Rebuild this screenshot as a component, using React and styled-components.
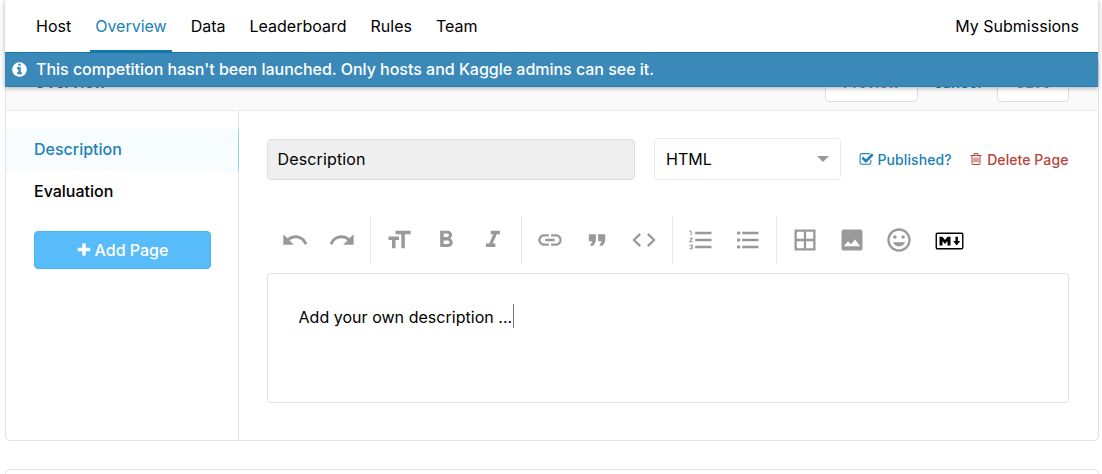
import React from "react";
import styled, { createGlobalStyle } from "styled-components";
import {
  MdUndo, MdRedo, MdFormatSize, MdFormatBold, MdFormatItalic, MdLink, MdFormatQuote, MdCode,
  MdFormatListNumbered, MdFormatListBulleted, MdBorderAll, MdInsertEmoticon,
} from "react-icons/md";

const Global = createGlobalStyle`
  * { box-sizing: border-box; }
  body { margin: 0; background: #fff; color: #000; font-family: Inter, "Liberation Sans", sans-serif; font-size: 16px; overflow: hidden; }
`;
const Page = styled.div`
  height: 474px;
  overflow: hidden;
  padding: 0 3px 0 5px;
`;
const Header = styled.header`
  position: relative;
  z-index: 2;
  height: 87px;
  margin-right: 1px;
  background: #fff;
  box-shadow: 0 1px 5px rgba(0, 0, 0, 0.32);
`;
const Nav = styled.nav`
  display: flex;
  height: 52px;
  padding: 0 14px 0 26px;
`;
const NavItem = styled.a`
  display: flex;
  align-items: center;
  height: 52px;
  padding: 0 5px;
  margin-right: ${(p) => (p.$last ? 0 : "14px")};
  margin-left: ${(p) => (p.$last ? "auto" : 0)};
  font-size: 16px;
  white-space: nowrap;
  color: ${(p) => (p.$active ? "#2081b8" : "#000")};
  border-bottom: 2px solid ${(p) => (p.$active ? "#1479ab" : "transparent")};
  border-top: 1px solid transparent;
`;
const Banner = styled.div`
  display: flex;
  align-items: center;
  height: 35px;
  padding: 0 0 1px 6px;
  gap: 8px;
  background: #3b89b8;
  border-top: 1px solid #1277a9;
  border-bottom: 1px solid #2b80b2;
  color: #fff;
  font-size: 16px;
  font-weight: 500;
  letter-spacing: -0.02px;
  white-space: nowrap;
`;
const Card = styled.section`
  height: 384px;
  margin-top: -30px;
  border: 1px solid #e2e2e2;
  border-radius: 5px;
`;
const NextCard = styled.section`
  height: 40px;
  margin-top: 28px;
  border: 1px solid #e2e2e2;
  border-radius: 5px;
`;
const CardHeader = styled.div`
  display: flex;
  align-items: center;
  height: 53px;
  padding: 0 29px 0 28px;
  background: #fafafa;
  border-bottom: 1px solid #ececec;
`;
const CardTitle = styled.h2`
  margin: 0 auto 0 0;
  padding-bottom: 5px;
  font-size: 16px;
  font-weight: 500;
  color: #666;
`;
const HeaderButton = styled.button`
  width: ${(p) => p.$w};
  height: 36px;
  padding: 0 0 3px;
  font: 500 15px Inter, sans-serif;
  color: ${(p) => (p.$plain ? "#2081b8" : "#888")};
  background: ${(p) => (p.$plain ? "transparent" : "#fff")};
  border: 1px solid ${(p) => (p.$plain ? "transparent" : "#dedede")};
  border-radius: 4px;
`;
const Columns = styled.div`
  display: flex;
  height: 329px;
`;
const Sidebar = styled.aside`
  width: 233px;
  padding-top: 18px;
  border-right: 1px solid #e2e2e2;
`;
const SideItem = styled.a`
  display: flex;
  align-items: center;
  height: 42px;
  margin-right: -1px;
  padding: 0 0 2px 28px;
  font-weight: 500;
  color: ${(p) => (p.$active ? "#2081b8" : "#000")};
  background: ${(p) => (p.$active ? "#f7fcff" : "transparent")};
  border-right: 1px solid ${(p) => (p.$active ? "#9bd2f8" : "transparent")};
`;
const AddButton = styled.button`
  display: flex;
  align-items: center;
  justify-content: center;
  gap: 3px;
  width: 177px;
  height: 38px;
  margin: 18px 0 0 28px;
  padding: 0 1px 0 0;
  font: 500 16px Inter, sans-serif;
  color: #fff;
  background: #58bbfa;
  border: 1px solid #46b4f8;
  border-radius: 4px;
`;
const Main = styled.main`
  flex: 1;
  padding: 27px 29px 0 28px;
`;
const Controls = styled.div`
  display: flex;
  align-items: center;
`;
const TitleField = styled.div`
  display: flex;
  align-items: center;
  width: 368px;
  height: 41px;
  padding-left: 9.5px;
  letter-spacing: 0.15px;
  background: #efefef;
  border: 1px solid #dedede;
  border-radius: 4px;
`;
const Select = styled.div`
  display: flex;
  align-items: center;
  justify-content: space-between;
  width: 187px;
  height: 42px;
  margin: 0 18px 0 18.5px;
  padding: 0 12px 1px 11.5px;
  border: 1px solid #ebebeb;
  border-radius: 4px;
`;
const Caret = styled.i`
  margin-right: -1px;
  border: 6px solid transparent;
  border-top-color: #999;
  border-bottom: 0;
`;
const Action = styled.a`
  display: flex;
  align-items: center;
  gap: 4px;
  margin-left: ${(p) => p.$left || 0};
  font-size: 14px;
  font-weight: 500;
  letter-spacing: 0.08px;
  white-space: nowrap;
  color: ${(p) => p.$color};
`;
const Toolbar = styled.div`
  display: flex;
  height: 48px;
  margin-top: 36px;
  color: #999;
`;
const Group = styled.div`
  display: flex;
  align-items: center;
  padding: 0 4.5px;
  border-right: ${(p) => (p.$last ? "0" : "1px solid #e8e8e8")};
`;
const Tool = styled.span`
  display: flex;
  align-items: center;
  justify-content: center;
  width: ${(p) => p.$w || "47px"};
  height: 48px;
  padding-top: ${(p) => p.$drop || 0};
  svg { display: block; flex: none; }
`;
const Editor = styled.div`
  display: flex;
  height: 130px;
  margin-top: 8.5px;
  padding: 31.5px 30.5px;
  line-height: 24px;
  letter-spacing: 0.03px;
  border: 1px solid #e2e2e2;
  border-radius: 4px;
`;
const Cursor = styled.i`
  width: 1px;
  height: 24px;
  margin-left: 1px;
  margin-top: -1px;
  background: #777;
`;

const Glyph = ({ size = 16, d, box = "0 0 1792 1792" }) => (
  <svg width={size} height={size} viewBox={box} fill="currentColor"><path d={d} /></svg>
);
const INFO = "M1152 1376v-160q0-14-9-23t-23-9h-96v-512q0-14-9-23t-23-9h-320q-14 0-23 9t-9 23v160q0 14 9 23t23 9h96v320h-96q-14 0-23 9t-9 23v160q0 14 9 23t23 9h448q14 0 23-9t9-23zm-128-896v-160q0-14-9-23t-23-9h-192q-14 0-23 9t-9 23v160q0 14 9 23t23 9h192q14 0 23-9t9-23zm640 416q0 209-103 385.500t-279.500 279.500-385.500 103-385.500-103-279.500-279.500-103-385.500 103-385.500 279.500-279.500 385.500-103 385.500 103 279.500 279.500 103 385.500z";
const PLUS = "M1600 736v192q0 40-28 68t-68 28h-416v416q0 40-28 68t-68 28h-192q-40 0-68-28t-28-68v-416h-416q-40 0-68-28t-28-68v-192q0-40 28-68t68-28h416v-416q0-40 28-68t68-28h192q40 0 68 28t28 68v416h416q40 0 68 28t28 68z";
const CHECK = "M1472 930v318q0 119-84.5 203.500t-203.500 84.500h-832q-119 0-203.500-84.500t-84.500-203.500v-832q0-119 84.500-203.500t203.500-84.500h832q63 0 117 25 15 7 18 23 3 17-9 29l-49 49q-10 10-23 10-3 0-9-2-23-6-45-6h-832q-66 0-113 47t-47 113v832q0 66 47 113t113 47h832q66 0 113-47t47-113v-254q0-13 9-22l64-64q10-10 23-10 6 0 12 3 20 8 20 29zm231-489l-814 814q-24 24-57 24t-57-24l-430-430q-24-24-24-57t24-57l110-110q24-24 57-24t57 24l263 263 647-647q24-24 57-24t57 24l110 110q24 24 24 57t-24 57z";
const TRASH = "M704 736v576q0 14-9 23t-23 9h-64q-14 0-23-9t-9-23v-576q0-14 9-23t23-9h64q14 0 23 9t9 23zm256 0v576q0 14-9 23t-23 9h-64q-14 0-23-9t-9-23v-576q0-14 9-23t23-9h64q14 0 23 9t9 23zm256 0v576q0 14-9 23t-23 9h-64q-14 0-23-9t-9-23v-576q0-14 9-23t23-9h64q14 0 23 9t9 23zm128 724v-948h-896v948q0 22 7 40.500t14.500 27 10.500 8.500h832q3 0 10.500-8.500t14.500-27 7-40.500zm-672-1076h448l-48-117q-7-9-17-11h-317q-10 2-17 11zm928 32v64q0 14-9 23t-23 9h-96v948q0 83-47 143.500t-113 60.500h-832q-66 0-113-58.500t-47-141.500v-952h-96q-14 0-23-9t-9-23v-64q0-14 9-23t23-9h309l70-167q15-37 54-63t79-26h320q40 0 79 26t54 63l70 167h309q14 0 23 9t9 23z";
const PHOTO = "M21 19V5c0-1.100-.9-2-2-2H5c-1.100 0-2 .9-2 2v14c0 1.100.9 2 2 2h14c1.100 0 2-.9 2-2zM5 17.400l3.600-4.400 2.500 2.700 3.500-4.100 4.400 5.800z";

const Markdown = () => (
  <svg width="29" height="18" viewBox="0 0 29 18">
    <rect x="1.250" y="1.250" width="26.500" height="15.500" rx="1.200" fill="#fff" stroke="#000" strokeWidth="1.400" />
    <path d="M4.500 13.500V4.700h3L10 8l2.500-3.300h3v8.800h-3V9L10 12 7.500 9v4.500z" fill="#000" />
    <path d="M20.500 4.700h2.400v4.200h2.300L21.700 13.500l-3.500-4.600h2.300z" fill="#000" />
  </svg>
);

const GROUPS = [
  [MdUndo, MdRedo],
  [MdFormatSize, MdFormatBold, MdFormatItalic],
  [MdLink, MdFormatQuote, MdCode],
  [MdFormatListNumbered, MdFormatListBulleted],
];
const TABS = ["Host", "Overview", "Data", "Leaderboard", "Rules", "Team"];

export default function App() {
  return (
    <Page>
      <Global />
      <Header>
        <Nav>
          {TABS.map((t) => <NavItem key={t} $active={t === "Overview"}>{t}</NavItem>)}
          <NavItem $last>My Submissions</NavItem>
        </Nav>
        <Banner>
          <Glyph d={INFO} size={17} />
          <span>This competition hasn't been launched. Only hosts and Kaggle admins can see it.</span>
        </Banner>
      </Header>
      <Card>
        <CardHeader>
          <CardTitle>Overview</CardTitle>
          <HeaderButton $w="93px">Preview</HeaderButton>
          <HeaderButton $w="79px" $plain>cancel</HeaderButton>
          <HeaderButton $w="72px">Save</HeaderButton>
        </CardHeader>
        <Columns>
          <Sidebar>
            <SideItem $active>Description</SideItem>
            <SideItem>Evaluation</SideItem>
            <AddButton><Glyph d={PLUS} size={16} />Add Page</AddButton>
          </Sidebar>
          <Main>
            <Controls>
              <TitleField>Description</TitleField>
              <Select>HTML<Caret /></Select>
              <Action $color="#2081b8"><Glyph d={CHECK} size={15} />Published?</Action>
              <Action $color="#b5443a" $left="17.5px"><Glyph d={TRASH} size={14} />Delete Page</Action>
            </Controls>
            <Toolbar>
              {GROUPS.map((icons, i) => (
                <Group key={i}>{icons.map((Icon, j) => <Tool key={j}><Icon size={28} /></Tool>)}</Group>
              ))}
              <Group $last>
                <Tool><MdBorderAll size={28} /></Tool>
                <Tool><Glyph d={PHOTO} box="0 0 24 24" size={28} /></Tool>
                <Tool><MdInsertEmoticon size={28} /></Tool>
                <Tool $w="54px" $drop="2px"><Markdown /></Tool>
              </Group>
            </Toolbar>
            <Editor>Add your own description ...<Cursor /></Editor>
          </Main>
        </Columns>
      </Card>
      <NextCard />
    </Page>
  );
}
